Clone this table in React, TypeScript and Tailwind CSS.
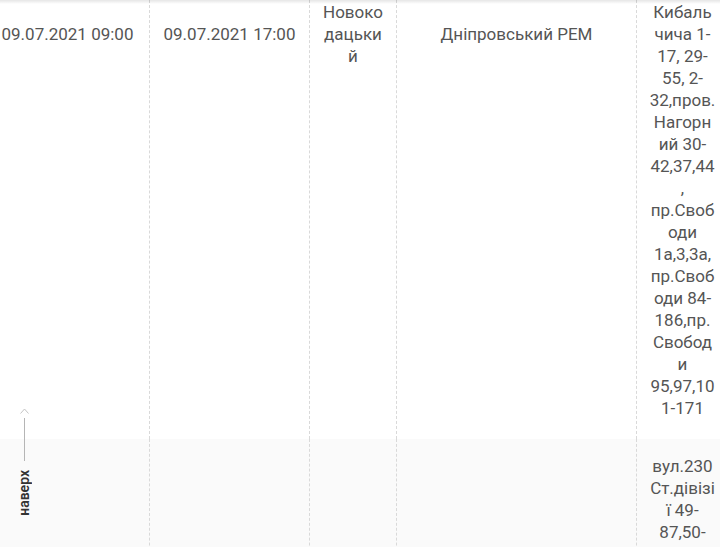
// @ts-nocheck
const ROWS = [
  {
    start: '09.07.2021 09:00',
    end: '09.07.2021 17:00',
    district: 'Новокодацький',
    rem: 'Дніпровський РЕМ',
    streets:
      'Кибальчича 1-17, 29-55, 2-32,пров. Нагорний 30-42,37,44, пр.Свободи 1а,3,3а, пр.Свободи 84-186,пр. Свободи 95,97,101-171',
  },
  {
    start: '',
    end: '',
    district: '',
    rem: '',
    streets: 'вул.230 Ст.дівізії 49-87,50-102',
  },
]

const cell = 'border-r border-dashed border-[#d9d9d9] text-center break-words pb-5'

export default function App() {
  return (
    <div className="relative h-[547px] w-[720px] overflow-hidden bg-white text-[17px] leading-[22px] text-[#555555] font-['Roboto',sans-serif]">
      <div className="-mt-[15px] -ml-[11px] flex flex-col">
        {ROWS.map((r, i) => (
          <div key={i} className={`flex ${i % 2 ? 'bg-[#fafafa]' : 'bg-white'}`}>
            <div className={`${cell} w-[161px] shrink-0 pl-[2px] pr-[5px] pt-[38px]`}>{r.start}</div>
            <div className={`${cell} w-[160px] shrink-0 px-1 pt-[38px]`}>{r.end}</div>
            <div className={`${cell} w-[87px] shrink-0 px-3 pt-4`}>{r.district}</div>
            <div className={`${cell} w-[240px] shrink-0 px-3 pt-[38px]`}>{r.rem}</div>
            <div className={`${cell} w-[92px] shrink-0 px-3 pt-4`}>{r.streets}</div>
          </div>
        ))}
      </div>

      {/* top shadow from the sticky header */}
      <div className="absolute inset-x-0 top-0 h-[4px] bg-gradient-to-b from-black/10 to-transparent" />

      {/* back to top */}
      <a className="absolute left-[14px] top-[408px] flex w-[20px] flex-col items-center text-[#333]">
        <svg width="9" height="6" viewBox="0 0 9 6" fill="none" stroke="#c4c4c4" strokeWidth="1">
          <path d="M0.5 5.5 L4.5 1 L8.5 5.5" />
        </svg>
        <div className="mt-[4px] h-[43px] w-px bg-[#b5b5b5]" />
        <span className="mt-[9px] rotate-180 text-[14px] font-semibold leading-[14px] [writing-mode:vertical-rl]">
          наверх
        </span>
      </a>
    </div>
  )
}
